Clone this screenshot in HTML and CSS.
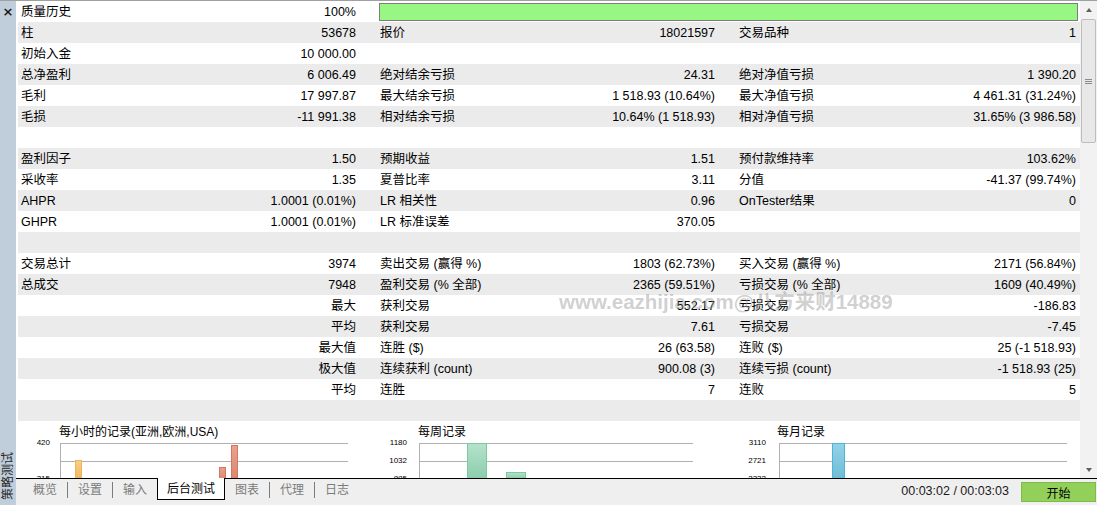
FILE: index.html
```html
<!DOCTYPE html>
<html lang="zh">
<head>
    <meta charset="UTF-8">
    <title>策略测试</title>
    <link rel="stylesheet" href="styles.css">
</head>
<body>
<div class="app">
    <aside class="side">
        <span class="close">×</span>
        <span class="side-title">策略测试</span>
    </aside>
    <div class="panel">
        <div class="view">
            <div class="content">
                <div class="report">
                    <div class="row">
                        <div class="cell"><span>质量历史</span><span>100%</span></div>
                        <div class="progress"><div class="progress-bar"></div></div>
                    </div>
                    <div class="row">
                        <div class="cell"><span>柱</span><span>53678</span></div>
                        <div class="cell"><span>报价</span><span>18021597</span></div>
                        <div class="cell"><span>交易品种</span><span>1</span></div>
                    </div>
                    <div class="row">
                        <div class="cell"><span>初始入金</span><span>10 000.00</span></div>
                    </div>
                    <div class="row">
                        <div class="cell"><span>总净盈利</span><span>6 006.49</span></div>
                        <div class="cell"><span>绝对结余亏损</span><span>24.31</span></div>
                        <div class="cell"><span>绝对净值亏损</span><span>1 390.20</span></div>
                    </div>
                    <div class="row">
                        <div class="cell"><span>毛利</span><span>17 997.87</span></div>
                        <div class="cell"><span>最大结余亏损</span><span>1 518.93 (10.64%)</span></div>
                        <div class="cell"><span>最大净值亏损</span><span>4 461.31 (31.24%)</span></div>
                    </div>
                    <div class="row">
                        <div class="cell"><span>毛损</span><span>-11 991.38</span></div>
                        <div class="cell"><span>相对结余亏损</span><span>10.64% (1 518.93)</span></div>
                        <div class="cell"><span>相对净值亏损</span><span>31.65% (3 986.58)</span></div>
                    </div>
                    <div class="row"></div>
                    <div class="row">
                        <div class="cell"><span>盈利因子</span><span>1.50</span></div>
                        <div class="cell"><span>预期收益</span><span>1.51</span></div>
                        <div class="cell"><span>预付款维持率</span><span>103.62%</span></div>
                    </div>
                    <div class="row">
                        <div class="cell"><span>采收率</span><span>1.35</span></div>
                        <div class="cell"><span>夏普比率</span><span>3.11</span></div>
                        <div class="cell"><span>分值</span><span>-41.37 (99.74%)</span></div>
                    </div>
                    <div class="row">
                        <div class="cell"><span>AHPR</span><span>1.0001 (0.01%)</span></div>
                        <div class="cell"><span>LR 相关性</span><span>0.96</span></div>
                        <div class="cell"><span>OnTester结果</span><span>0</span></div>
                    </div>
                    <div class="row">
                        <div class="cell"><span>GHPR</span><span>1.0001 (0.01%)</span></div>
                        <div class="cell"><span>LR 标准误差</span><span>370.05</span></div>
                    </div>
                    <div class="row"></div>
                    <div class="row">
                        <div class="cell"><span>交易总计</span><span>3974</span></div>
                        <div class="cell"><span>卖出交易 (赢得 %)</span><span>1803 (62.73%)</span></div>
                        <div class="cell"><span>买入交易 (赢得 %)</span><span>2171 (56.84%)</span></div>
                    </div>
                    <div class="row">
                        <div class="cell"><span>总成交</span><span>7948</span></div>
                        <div class="cell"><span>盈利交易 (% 全部)</span><span>2365 (59.51%)</span></div>
                        <div class="cell"><span>亏损交易 (% 全部)</span><span>1609 (40.49%)</span></div>
                    </div>
                    <div class="row">
                        <div class="cell"><span></span><span>最大</span></div>
                        <div class="cell"><span>获利交易</span><span>552.17</span></div>
                        <div class="cell"><span>亏损交易</span><span>-186.83</span></div>
                    </div>
                    <div class="row">
                        <div class="cell"><span></span><span>平均</span></div>
                        <div class="cell"><span>获利交易</span><span>7.61</span></div>
                        <div class="cell"><span>亏损交易</span><span>-7.45</span></div>
                    </div>
                    <div class="row">
                        <div class="cell"><span></span><span>最大值</span></div>
                        <div class="cell"><span>连胜 ($)</span><span>26 (63.58)</span></div>
                        <div class="cell"><span>连败 ($)</span><span>25 (-1 518.93)</span></div>
                    </div>
                    <div class="row">
                        <div class="cell"><span></span><span>极大值</span></div>
                        <div class="cell"><span>连续获利 (count)</span><span>900.08 (3)</span></div>
                        <div class="cell"><span>连续亏损 (count)</span><span>-1 518.93 (25)</span></div>
                    </div>
                    <div class="row">
                        <div class="cell"><span></span><span>平均</span></div>
                        <div class="cell"><span>连胜</span><span>7</span></div>
                        <div class="cell"><span>连败</span><span>5</span></div>
                    </div>
                    <div class="row"></div>
                </div>

                <!-- 三个分布图 -->
                <div class="charts">
                    <svg width="1062" height="57" viewBox="0 0 1062 57">
                        <defs>
                            <linearGradient id="gOrange" x1="0" y1="0" x2="0" y2="1">
                                <stop offset="0" stop-color="#f7cf86"/>
                                <stop offset="1" stop-color="#f0b960"/>
                            </linearGradient>
                            <linearGradient id="gRed" x1="0" y1="0" x2="0" y2="1">
                                <stop offset="0" stop-color="#e8a38f"/>
                                <stop offset="1" stop-color="#dc8670"/>
                            </linearGradient>
                            <linearGradient id="gGreen" x1="0" y1="0" x2="0" y2="1">
                                <stop offset="0" stop-color="#b5e3cb"/>
                                <stop offset="1" stop-color="#8ccdac"/>
                            </linearGradient>
                            <linearGradient id="gBlue" x1="0" y1="0" x2="0" y2="1">
                                <stop offset="0" stop-color="#93d3e8"/>
                                <stop offset="1" stop-color="#6fbcd6"/>
                            </linearGradient>
                        </defs>

                        <text class="ct" x="41" y="15">每小时的记录(亚洲,欧洲,USA)</text>
                        <text class="ax" x="32" y="24">420</text>
                        <text class="ax" x="32" y="60">315</text>
                        <line class="grid" x1="42" y1="22.5" x2="330" y2="22.5"/>
                        <line class="grid" x1="42" y1="40.5" x2="330" y2="40.5"/>
                        <line class="grid" x1="42.5" y1="22" x2="42.5" y2="57"/>
                        <rect x="57.5" y="39.5" width="6" height="18" fill="url(#gOrange)" stroke="#eeb45a"/>
                        <rect x="201.5" y="46.5" width="6" height="11" fill="url(#gRed)" stroke="#d7765e"/>
                        <rect x="213.5" y="24.5" width="6" height="33" fill="url(#gRed)" stroke="#d7765e"/>

                        <text class="ct" x="400" y="15">每周记录</text>
                        <text class="ax" x="389" y="24">1180</text>
                        <text class="ax" x="389" y="42">1032</text>
                        <text class="ax" x="389" y="60">885</text>
                        <line class="grid" x1="401" y1="22.5" x2="675" y2="22.5"/>
                        <line class="grid" x1="401" y1="40.5" x2="675" y2="40.5"/>
                        <line class="grid" x1="401.5" y1="22" x2="401.5" y2="57"/>
                        <rect x="449.5" y="22.5" width="19" height="35" fill="url(#gGreen)" stroke="#7dc9a2"/>
                        <rect x="488.5" y="51.5" width="19" height="6" fill="url(#gGreen)" stroke="#7dc9a2"/>

                        <text class="ct" x="759" y="15">每月记录</text>
                        <text class="ax" x="748" y="24">3110</text>
                        <text class="ax" x="748" y="42">2721</text>
                        <text class="ax" x="748" y="60">2332</text>
                        <line class="grid" x1="761" y1="22.5" x2="1049" y2="22.5"/>
                        <line class="grid" x1="761" y1="40.5" x2="1049" y2="40.5"/>
                        <line class="grid" x1="761.5" y1="22" x2="761.5" y2="57"/>
                        <rect x="814.5" y="22.5" width="12" height="35" fill="url(#gBlue)" stroke="#4db5d7"/>
                    </svg>
                </div>

                <div class="watermark">www.eazhijia.com@八方来财14889</div>
            </div>

            <div class="scrollbar">
                <div class="sb-btn"><i class="arrow-up"></i></div>
                <div class="sb-thumb"><i></i><i></i><i></i></div>
                <div class="sb-track"></div>
                <div class="sb-btn"><i class="arrow-down"></i></div>
            </div>
        </div>

        <div class="tabbar">
            <a class="tab sep" href="javascript:;">概览</a>
            <a class="tab sep" href="javascript:;">设置</a>
            <a class="tab" href="javascript:;">输入</a>
            <a class="tab active" href="javascript:;">后台测试</a>
            <a class="tab sep" href="javascript:;">图表</a>
            <a class="tab sep" href="javascript:;">代理</a>
            <a class="tab" href="javascript:;">日志</a>
            <span class="time">00:03:02 / 00:03:03</span>
            <button class="start">开始</button>
        </div>
    </div>
</div>
</body>
</html>
```

FILE: styles.css
```css
/* reset */
*{
    box-sizing: border-box;
}
body{
    margin: 0;
    font-family: "Liberation Sans", "Noto Sans CJK SC", sans-serif;
    font-size: 12.5px;
    color: #000;
    background: #fff;
    overflow: hidden;
}
a{
    color: inherit;
    text-decoration: none;
}
/* layout */
.app{
    display: flex;
    height: 505px;
    border-top: 1px solid #a0a0a0;
}
.side{
    width: 16px;
    flex-shrink: 0;
    background: #c0cedc;
    display: flex;
    flex-direction: column;
    justify-content: space-between;
    align-items: center;
}
.close{
    font: bold 13px/1 "DejaVu Sans", sans-serif;
    margin-top: 4px;
    color: #1a1a1a;
}
.side-title{
    writing-mode: vertical-rl;
    text-orientation: sideways;
    transform: rotate(180deg);
    font-size: 12px;
    line-height: 14px;
    color: #262626;
    margin-bottom: 5px;
}
.panel{
    flex: 1;
    min-width: 0;
    display: flex;
    flex-direction: column;
}
.view{
    flex: 1;
    min-height: 0;
    display: flex;
}
.content{
    flex: 1;
    padding-left: 2px;
    position: relative;
    overflow: hidden;
}
/* report rows */
.row{
    display: grid;
    grid-template-columns: 358px 359px 1fr;
    height: 21px;
    line-height: 21px;
}
.row:nth-child(even){
    background: #ebebeb;
}
.cell{
    display: flex;
    justify-content: space-between;
    white-space: nowrap;
    padding: 0 20px 0 3px;
    line-height: 22px;
}
.cell:nth-child(2){
    padding-left: 4px;
}
.cell:nth-child(3){
    padding: 0 4px;
}
.progress{
    grid-column: 2 / 4;
    padding: 2px 2px 2px 3px;
}
.progress-bar{
    height: 100%;
    border: 1px solid #7d7d7d;
    background: #98f683;
}
/* charts */
.charts{
    height: 57px;
}
.charts svg{
    display: block;
}
.ct{
    font-size: 12px;
    fill: #000;
}
.ax{
    font-size: 8px;
    fill: #000;
    text-anchor: end;
}
.grid{
    stroke: #b0b0b0;
    stroke-width: 1;
}
.watermark{
    position: absolute;
    left: 543px;
    top: 291px;
    font-size: 20.5px;
    font-weight: bold;
    line-height: 1;
    white-space: nowrap;
    color: rgba(150, 150, 150, 0.45);
    pointer-events: none;
}
/* scrollbar */
.scrollbar{
    width: 17px;
    flex-shrink: 0;
    display: flex;
    flex-direction: column;
    background: #f2f2f2;
}
.sb-btn{
    height: 17px;
    display: flex;
    align-items: center;
    justify-content: center;
}
.arrow-up{
    border: 3px solid transparent;
    border-top: 0;
    border-bottom: 4px solid #606060;
}
.arrow-down{
    border: 3px solid transparent;
    border-bottom: 0;
    border-top: 4px solid #606060;
}
.sb-thumb{
    height: 124px;
    margin: 1px 1px 0;
    border: 1px solid #bdbdbd;
    border-radius: 2px;
    background: #e8e8e8;
    display: flex;
    flex-direction: column;
    align-items: center;
    justify-content: center;
    gap: 1px;
}
.sb-thumb i{
    width: 7px;
    height: 1px;
    background: #8a8a8a;
}
.sb-track{
    flex: 1;
}
/* tabs */
.tabbar{
    height: 27px;
    flex-shrink: 0;
    border-top: 1px solid #000;
    background: #efefef;
    display: flex;
    align-items: flex-start;
    padding-left: 7px;
}
.tab{
    margin-top: 3px;
    padding: 0 10px;
    height: 16px;
    line-height: 16px;
    font-size: 12px;
    color: #7b7b7b;
}
.tab.sep{
    border-right: 1px solid #7b7b7b;
}
.tab.active{
    margin-top: -1px;
    height: 22px;
    line-height: 22px;
    padding: 0 9px;
    background: #fff;
    color: #000;
    border: 1px solid #000;
    border-top: 0;
}
.time{
    margin-left: auto;
    margin-top: 4px;
    line-height: 16px;
    color: #1a1a1a;
}
.start{
    margin: 3px 1px 0 12px;
    width: 75px;
    height: 20px;
    border: 1px solid #7eba4a;
    background: #92d05a;
    font-family: "Liberation Sans", "Noto Sans CJK SC", sans-serif;
    font-size: 12px;
    color: #000;
    padding: 0;
}
```
